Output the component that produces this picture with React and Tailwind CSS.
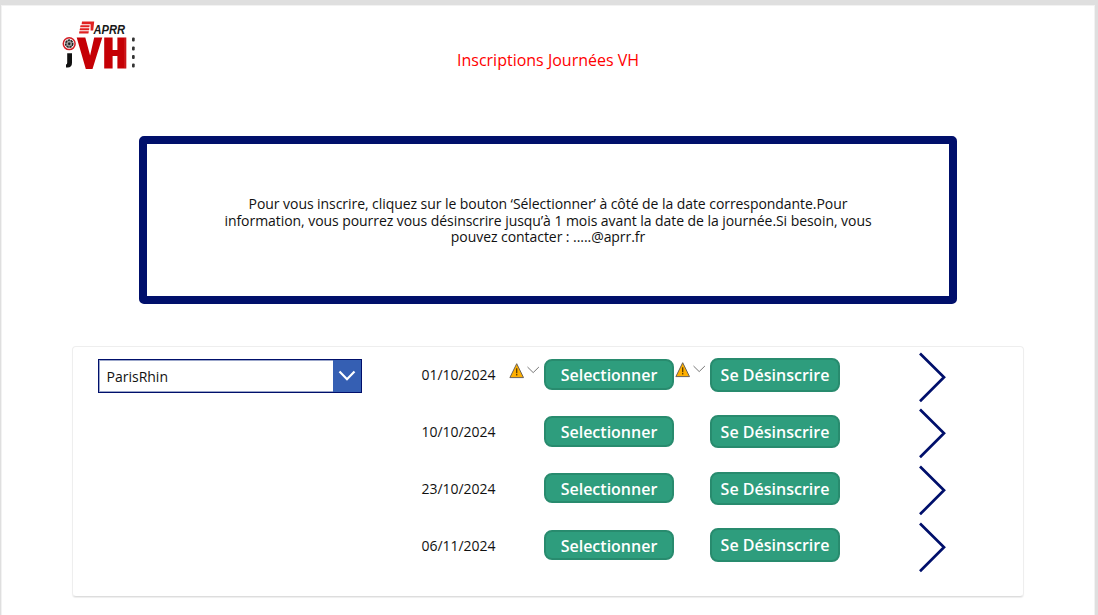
const dates = ['01/10/2024', '10/10/2024', '23/10/2024', '06/11/2024'];

function Logo() {
  return (
    <svg className="block" width="76" height="52" viewBox="0 0 76 52" role="img" aria-label="APRR VH">
      <g fill="#e02222">
        <path d="M20 .5h12.2l-1 8.9h-2.6V3.2h-9z" />
        <path d="M18.5 4.2h9.2l-.4 2.1h-9.2z" />
        <path d="M18 7.2h9.4l-.4 2.1h-9.4z" />
        <path d="M17.3 10.2h9.5l-.4 2.4h-9.3z" />
      </g>
      <text x="31.5" y="12.6" textLength="31.5" lengthAdjust="spacingAndGlyphs" fontFamily="Liberation Sans, sans-serif" fontSize="12.5" fontWeight="700" fontStyle="italic" fill="#181818">APRR</text>
      <circle cx="7.2" cy="22.7" r="5.9" fill="#fff" stroke="#d32027" strokeWidth="1.5" />
      <circle cx="7.2" cy="22.7" r="3.6" fill="#999" stroke="#222" strokeWidth="1.5" strokeDasharray="2.3 .7" />
      <circle cx="7.2" cy="22.7" r="1.2" fill="#222" />
      <path d="M5.2 32.3h4.8v9.5q0 4.6-4.4 4.8H4v-3.2h.1q1.1 0 1.1-1.7z" fill="#111" />
      <path d="M14.7 16.5h8.6l4.8 18 4.1-18h8.1L30.5 48h-6.7z" fill="#c50005" />
      <path d="M42.2 16.5h8.4v12.4h4.8V16.5h8.9v30.9H55.4V35h-4.8v12.4h-8.4z" fill="#c50005" />
      <path d="M63 17v30" stroke="#df5555" strokeWidth=".5" />
      <g fill="#333">
        <rect x="70" y="16.5" width="2.7" height="4" rx="1" />
        <rect x="70" y="25.5" width="2.7" height="4" rx="1" />
        <rect x="70" y="34" width="2.7" height="4" rx="1" />
        <rect x="70" y="42.5" width="2.7" height="4" rx="1" />
      </g>
    </svg>
  );
}

function Warning() {
  return (
    <svg width="31" height="18" viewBox="0 0 31 18" fill="none">
      <path d="M7.7 1.7L14.5 15.6H.9z" fill="#ffb000" stroke="#6b6258" strokeWidth="1" />
      <path d="M7.7 6.2v5M7.7 12v1.5" stroke="#5c3c00" strokeWidth="1.3" />
      <path d="M18.5 5l5.7 5.6L29.9 5" stroke="#777" strokeWidth="1" />
    </svg>
  );
}

function Row({ date, warning }) {
  return (
    <div className="flex h-[56.8px] items-start">
      <div className="w-[89px] pt-[15.4px] pl-[1.5px] text-[14px] leading-[20px] tracking-[-0.03px] whitespace-nowrap">{date}</div>
      <div className="h-10 w-[35px] shrink-0 pt-[12px]">{warning && <Warning />}</div>
      <button className="mt-[9.4px] h-[30.5px] w-[130px] shrink-0 rounded-[8px] border-2 border-[#288b6e] bg-[#2e9d7d] text-[16px] leading-[28px] font-semibold whitespace-nowrap text-white">Selectionner</button>
      <div className="h-10 w-[36px] shrink-0 pt-[11px] pl-px">{warning && <Warning />}</div>
      <button className="mt-[8px] h-[33.5px] w-[130px] shrink-0 rounded-[8px] border-2 border-[#288b6e] bg-[#2e9d7d] pt-px text-[16px] leading-[29px] font-semibold whitespace-nowrap text-white">Se Désinscrire</button>
      <svg className="mt-[1.7px] ml-[78px] shrink-0" width="29" height="51" viewBox="0 0 29 51" fill="none">
        <path d="M2 1.5L26 25.3 2 49.3" stroke="#000f6b" strokeWidth="2.7" />
      </svg>
    </div>
  );
}

export default function App() {
  return (
    <div className="h-[615px] overflow-hidden bg-[#dfdfdf] pt-[5px] pr-[3px] pl-px font-['Open_Sans',sans-serif] text-[#111]">
      <main className="flex h-full flex-col border border-b-0 border-[#f2f2f2] bg-white">
        <header className="flex h-[130px] items-start pt-[15px] pl-[60px]">
          <Logo />
          <h1 className="mt-[26px] ml-[319px] text-[16px] leading-[26px] whitespace-nowrap text-[#ff0000]">Inscriptions Journées VH</h1>
        </header>
        <section className="ml-[137px] flex h-[168px] w-[818px] items-center justify-center rounded-[5px] border-8 border-[#000f6b] pt-[2px] text-center text-[14px] leading-[16.6px] tracking-[-0.06px] whitespace-nowrap">
          <p>
            Pour vous inscrire, cliquez sur le bouton ‘Sélectionner’ à côté de la date correspondante.Pour<br />
            information, vous pourrez vous désinscrire jusqu’à 1 mois avant la date de la journée.Si besoin, vous<br />
            pouvez contacter : .....@aprr.fr
          </p>
        </section>
        <section className="mt-[42px] ml-[70px] flex h-[251px] w-[952px] rounded-[4px] border border-[#eeeeee] border-b-[#dddddd] shadow-[0_1px_1px_#eeeeee]">
          <div className="w-[347px] shrink-0 pt-[12px] pl-[24.5px]">
            <div className="flex h-[34px] w-[264.5px] border-[1.5px] border-[#000f6b] shadow-[inset_0_0_0_1px_#9ba6ca]">
              <span className="flex-1 pt-[7px] pl-[8px] text-[14px] leading-[20px]">ParisRhin</span>
              <span className="flex w-[28px] items-center justify-center bg-[#355fb3]">
                <svg width="18" height="12" viewBox="0 0 18 12" fill="none"><path d="M1.5 1.5L9 9.2l7.5-7.7" stroke="#fff" strokeWidth="2.2" /></svg>
              </span>
            </div>
          </div>
          <div className="flex flex-col pt-[3px]">
            {dates.map((date, index) => <Row key={date} date={date} warning={index === 0} />)}
          </div>
        </section>
      </main>
    </div>
  );
}
